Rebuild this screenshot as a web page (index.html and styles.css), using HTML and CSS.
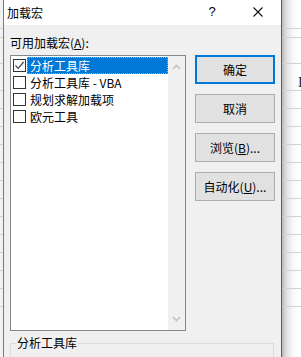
FILE: index.html
```html
<!doctype html>
<html lang="zh-CN">
<head>
<meta charset="utf-8">
<title>加载宏</title>
<link rel="stylesheet" href="styles.css">
</head>
<body>
<div class="screen">

  <div class="sheet sheet-left">
    <div class="row r1"></div><div class="row r2"></div><div class="row r3"></div><div class="row r4"></div>
    <div class="row"></div><div class="row"></div><div class="row"></div><div class="row"></div>
    <div class="row"></div><div class="row"></div><div class="row"></div><div class="row"></div>
    <div class="row"></div><div class="row"></div><div class="row"></div><div class="row"></div>
  </div>

  <div class="dialog">
    <div class="titlebar">
      <span class="title">加载宏</span>
      <span class="tb-btn help">?</span>
      <span class="tb-btn close">
        <svg width="10" height="10" viewBox="0 0 10 10"><path d="M0.5 0.5L9.5 9.5M9.5 0.5L0.5 9.5" stroke="#111" stroke-width="1.1" fill="none"/></svg>
      </span>
    </div>

    <div class="content">
      <div class="caption">可用加载宏(<u>A</u>):</div>

      <div class="main">
        <div class="listbox">
          <ul class="items">
            <li class="item selected">
              <span class="check">
                <svg width="11" height="11" viewBox="0 0 11 11"><path d="M1.5 5.5L4.2 8.3L9.6 2" stroke="#444" stroke-width="1.2" fill="none"/></svg>
              </span>
              <span class="label">分析工具库</span>
            </li>
            <li class="item"><span class="check"></span><span class="label">分析工具库 - VBA</span></li>
            <li class="item"><span class="check"></span><span class="label">规划求解加载项</span></li>
            <li class="item"><span class="check"></span><span class="label">欧元工具</span></li>
          </ul>
          <div class="scrollbar">
            <svg width="9" height="6" viewBox="0 0 9 6"><path d="M1 5L4.5 1.5L8 5" stroke="#c2c2c2" stroke-width="1.6" fill="none"/></svg>
            <svg width="9" height="6" viewBox="0 0 9 6"><path d="M1 1L4.5 4.5L8 1" stroke="#c2c2c2" stroke-width="1.6" fill="none"/></svg>
          </div>
        </div>

        <div class="buttons">
          <button class="btn default">确定</button>
          <button class="btn">取消</button>
          <button class="btn">浏览(<u>B</u>)...</button>
          <button class="btn">自动化(<u>U</u>)...</button>
        </div>
      </div>

      <fieldset class="desc">
        <legend>分析工具库</legend>
      </fieldset>
    </div>
  </div>

  <div class="sheet sheet-right">
    <div class="row r1"></div><div class="row r2"></div><div class="row r3"></div>
    <div class="row r4"><span class="cell">I</span></div>
    <div class="row"></div><div class="row"></div><div class="row"></div><div class="row"></div>
    <div class="row"></div><div class="row"></div><div class="row"></div><div class="row"></div>
    <div class="row"></div><div class="row"></div><div class="row"></div><div class="row"></div>
  </div>

</div>
</body>
</html>
```

FILE: styles.css
```css
* {
  box-sizing: border-box;
}
body {
  margin: 0;
  background: #fff;
  font: 12px/16px "Noto Sans CJK SC", "Liberation Sans", sans-serif;
  color: #000;
}
.screen {
  display: flex;
  width: 301px;
  height: 357px;
  overflow: hidden;
}

/* spreadsheet behind the dialog */
.sheet {
  display: flex;
  flex-direction: column;
  overflow: hidden;
}
.sheet-left {
  width: 3px;
  background: #f2f2f2;
}
.sheet-right {
  flex: 1;
  background: linear-gradient(to right, #b9b9b9 0, #dedede 4px, #f6f6f6 10px, #fff 16px);
}
.row {
  flex: none;
  height: 18px;
  border-bottom: 1px solid #d2d2d2;
}
.row.r1 { height: 29px; }
.row.r2 { height: 9px; }
.row.r3 { height: 26px; }
.row.r4 { height: 27px; }
.cell {
  display: block;
  padding: 12px 0 0 16px;
  font: 14px/14px "Liberation Serif", serif;
  color: #222;
}

/* dialog */
.dialog {
  width: 279px;
  flex: none;
  display: flex;
  flex-direction: column;
  background: #f0f0f0;
  border-left: 1px solid #7a7a7a;
  border-right: 1px solid #5f5f5f;
}
.titlebar {
  display: flex;
  align-items: center;
  height: 25px;
  background: #fff;
}
.title {
  padding-left: 3px;
  flex: 1;
}
.tb-btn {
  display: flex;
  justify-content: center;
  align-items: center;
  width: 46px;
  height: 25px;
}
.help {
  font: 13px "Liberation Sans", sans-serif;
  padding-bottom: 2px;
}
.close {
  padding-bottom: 1px;
}

.content {
  padding: 10px 6px 0 6px;
}
.caption {
  height: 16px;
}
.main {
  display: flex;
  margin-top: 4px;
  gap: 9px;
}

/* listbox */
.listbox {
  display: flex;
  width: 176px;
  height: 276px;
  background: #fff;
  border: 1px solid #828790;
}
.items {
  flex: 1;
  margin: 0;
  padding: 1px 0 0 2px;
  list-style: none;
}
.item {
  display: flex;
  align-items: center;
  height: 17px;
}
.check {
  display: flex;
  justify-content: center;
  align-items: center;
  width: 13px;
  height: 13px;
  border: 1px solid #333;
  background: #fff;
  margin-right: 1px;
}
.label {
  flex: 1;
  height: 17px;
  line-height: 15px;
  padding-left: 2px;
  border: 1px solid transparent;
  white-space: nowrap;
}
.selected .label {
  background: #0078d7;
  color: #fff;
  border: 1px dotted #f39a3a;
}
.scrollbar {
  width: 17px;
  display: flex;
  flex-direction: column;
  justify-content: space-between;
  align-items: center;
  padding: 8px 0;
  background: #f0f0f0;
}

/* buttons */
.buttons {
  display: flex;
  flex-direction: column;
  gap: 10px;
}
.btn {
  width: 80px;
  height: 29px;
  padding: 0;
  font: inherit;
  color: #000;
  background: #e1e1e1;
  border: 1px solid #adadad;
}
.btn.default {
  border: 2px solid #0078d7;
}

/* description group */
.desc {
  margin: 5px 1px 0 0;
  padding: 0 5px;
  height: 40px;
  border: 1px solid #dcdcdc;
}
.desc legend {
  padding: 0 1px;
  line-height: 14px;
}
```
